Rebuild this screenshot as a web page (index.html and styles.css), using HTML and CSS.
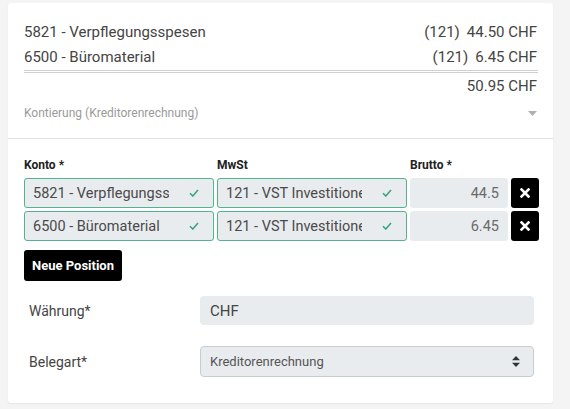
FILE: index.html
```html
<!DOCTYPE html>
<html lang="de">
<head>
<meta charset="utf-8">
<title>Kontierung</title>
<link rel="stylesheet" href="styles.css">
</head>
<body>
<div class="page">
  <div class="card">
    <section class="summary">
      <div class="line"><span>5821 - Verpflegungsspesen</span><span class="amt"><span>(121)</span><span>44.50 CHF</span></span></div>
      <div class="line"><span>6500 - Büromaterial</span><span class="amt"><span>(121)</span><span>6.45 CHF</span></span></div>
      <div class="total">50.95 CHF</div>
      <div class="kont"><span>Kontierung (Kreditorenrechnung)</span><svg class="caret" width="9" height="5" viewBox="0 0 9 5"><path d="M0 0H9L4.5 5Z" fill="#b0b0b0"/></svg></div>
    </section>
    <section class="positions">
      <div class="grid">
        <div class="lbl">Konto *</div>
        <div class="lbl">MwSt</div>
        <div class="lbl">Brutto *</div>
        <div></div>

        <div class="field valid"><span class="val">5821 - Verpflegungsspesen</span><svg class="check" width="10" height="8" viewBox="0 0 10 8"><path d="M1 4.2L3.8 7L9 1" fill="none" stroke="#3aa57c" stroke-width="1.6"/></svg></div>
        <div class="field valid"><span class="val">121 - VST Investitionen</span><svg class="check" width="10" height="8" viewBox="0 0 10 8"><path d="M1 4.2L3.8 7L9 1" fill="none" stroke="#3aa57c" stroke-width="1.6"/></svg></div>
        <div class="field num">44.5</div>
        <button class="del" type="button"><svg width="10" height="10" viewBox="0 0 10 10"><path d="M1.5 1.5L8.5 8.5M8.5 1.5L1.5 8.5" stroke="#fff" stroke-width="2.6" stroke-linecap="square"/></svg></button>

        <div class="field valid"><span class="val">6500 - Büromaterial</span><svg class="check" width="10" height="8" viewBox="0 0 10 8"><path d="M1 4.2L3.8 7L9 1" fill="none" stroke="#3aa57c" stroke-width="1.6"/></svg></div>
        <div class="field valid"><span class="val">121 - VST Investitionen</span><svg class="check" width="10" height="8" viewBox="0 0 10 8"><path d="M1 4.2L3.8 7L9 1" fill="none" stroke="#3aa57c" stroke-width="1.6"/></svg></div>
        <div class="field num">6.45</div>
        <button class="del" type="button"><svg width="10" height="10" viewBox="0 0 10 10"><path d="M1.5 1.5L8.5 8.5M8.5 1.5L1.5 8.5" stroke="#fff" stroke-width="2.6" stroke-linecap="square"/></svg></button>
      </div>
      <button class="add" type="button">Neue Position</button>
      <div class="form">
        <div class="flbl">Währung*</div>
        <div class="finput">CHF</div>
        <div class="flbl">Belegart*</div>
        <div class="fselect"><span>Kreditorenrechnung</span><svg width="8" height="11" viewBox="0 0 8 11"><path d="M0 4.2H8L4 0Z M0 6.8H8L4 11Z" fill="#333"/></svg></div>
      </div>
    </section>
  </div>
</div>
</body>
</html>
```
FILE: styles.css
```css
* { box-sizing: border-box; }
body {
  margin: 0;
  background: #f4f4f4;
  font-family: Roboto, "Liberation Sans", sans-serif;
  color: #3d3d3d;
}
.page { padding: 3px 17px 7px 8px; }
.card {
  background: #fff;
  border-radius: 3px;
  box-shadow: 0 1px 2px rgba(0,0,0,0.06);
}
.summary {
  padding: 17px 15px 15px 16px;
  border-bottom: 1px solid #e2e2e2;
}
.line {
  display: flex;
  justify-content: space-between;
  font-size: 15px;
  line-height: 25px;
  padding-right: 1px;
  color: #444;
}
.amt { display: flex; gap: 7px; }
.total {
  border-top: 3px double #cfcfcf;
  padding-top: 1px;
  padding-right: 1px;
  text-align: right;
  font-size: 15px;
  line-height: 25px;
  color: #444;
}
.kont {
  margin-top: 4px;
  display: flex;
  justify-content: space-between;
  align-items: center;
  font-size: 12px;
  line-height: 20px;
  color: #9a9a9a;
  padding-right: 1px;
}
.positions { padding: 17px 15px 26px 16px; }
.grid {
  display: grid;
  grid-template-columns: 190px 190px 98px 28px;
  column-gap: 3px;
  row-gap: 3px;
}
.lbl {
  font-size: 12px;
  font-weight: 700;
  line-height: 16px;
  color: #222;
  margin-bottom: 2px;
  padding-top: 1px;
}
.field {
  height: 30px;
  background: #e9ecef;
  border-radius: 3px;
  display: flex;
  align-items: center;
  font-size: 14.5px;
  color: #4a4a4a;
}
.valid {
  border: 1px solid #52b38c;
  padding: 0 14px 0 8px;
}
.val {
  flex: 1;
  white-space: nowrap;
  overflow: hidden;
  margin-right: 20px;
}
.check { flex: none; }
.num {
  justify-content: flex-end;
  padding-right: 9px;
  color: #6a6a6a;
}
.del {
  height: 30px;
  border: 0;
  border-radius: 3px;
  background: #000;
  padding: 0;
  display: flex;
  align-items: center;
  justify-content: center;
}
.add {
  margin-top: 9px;
  height: 31px;
  width: 98px;
  border: 0;
  border-radius: 3px;
  background: #000;
  color: #fff;
  font-family: Roboto, sans-serif;
  font-size: 13px;
  font-weight: 700;
  padding: 0;
}
.form {
  margin-top: 15px;
  display: grid;
  grid-template-columns: 176px 334px;
  row-gap: 21px;
  align-items: center;
}
.flbl {
  padding-left: 5px;
  font-size: 14px;
  color: #444;
}
.finput {
  height: 29px;
  background: #e9ecef;
  border-radius: 4px;
  padding-left: 10px;
  display: flex;
  align-items: center;
  font-size: 15px;
  color: #444;
}
.fselect {
  height: 31px;
  background: #e9ecef;
  border: 1px solid #c9cdd1;
  border-radius: 4px;
  padding: 0 13px 0 9px;
  display: flex;
  align-items: center;
  justify-content: space-between;
  font-size: 13px;
  color: #555;
}
```
